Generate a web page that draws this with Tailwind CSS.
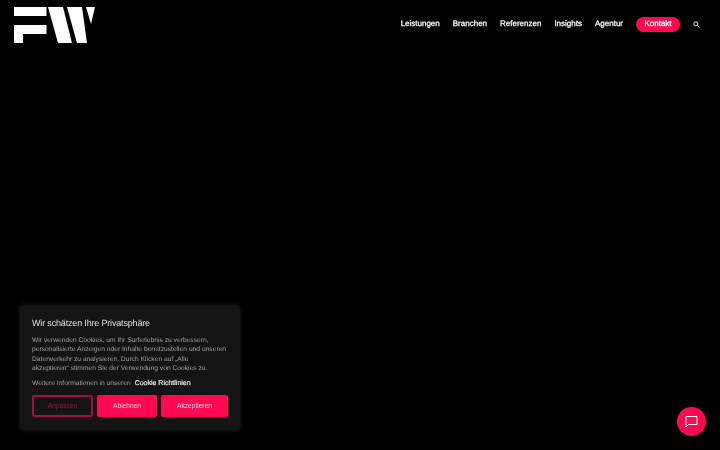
<!DOCTYPE html>
<html lang="de">
<head>
    <meta charset="UTF-8">
    <meta name="viewport" content="width=device-width, initial-scale=1.0">
    <title>FW</title>
    <script src="https://cdn.jsdelivr.net/npm/@tailwindcss/browser@4"></script>
</head>
<body class="bg-black h-[450px] overflow-hidden relative font-['Liberation_Sans',sans-serif] [text-rendering:geometricPrecision]">

    <!-- Header -->
    <header class="flex items-start justify-between pl-[14px] pr-[20px] pt-[7px]">
        <svg class="w-[82px] h-[37px]" viewBox="0 0 82 37" fill="#fff">
            <path d="M0 0H32.500V9H0Z"/>
            <path d="M0 18H32.500V27H9V36H0Z"/>
            <path d="M34 0H49L58 36H44Z"/>
            <path d="M53 0H68L73 36H63Z"/>
            <path d="M72 0H81L77 17Z"/>
        </svg>
        <nav class="flex items-center gap-[13px] text-white text-[8px] h-[14px] mt-[10px] [-webkit-text-stroke:0.25px_white] blur-[0.25px]">
            <a>Leistungen</a>
            <a>Branchen</a>
            <a>Referenzen</a>
            <a>Insights</a>
            <a>Agentur</a>
            <a class="bg-[#ff0a50] rounded-full w-[44px] h-[15px] flex items-center justify-center">Kontakt</a>
            <svg class="w-[7px] h-[7px]" viewBox="0 0 8 8" fill="none" stroke="#fff" stroke-width="1">
                <circle cx="3.2" cy="3.2" r="2.4"/>
                <path d="M5 5L7.5 7.5"/>
            </svg>
        </nav>
    </header>

    <!-- Cookie Banner -->
    <div class="absolute left-[20px] top-[305px] w-[220px] h-[125px] bg-[#141414] rounded-[4px] shadow-[0_0_4px_rgba(255,255,255,0.12)] px-[12px] pt-[12px] text-[#a0a0a0] blur-[0.25px]">
        <h2 class="text-[9px] leading-[13px] text-[#e0e0e0] tracking-[-0.17px]">Wir schätzen Ihre Privatsphäre</h2>
        <p class="text-[6.7px] leading-[9.4px] mt-[6px] whitespace-nowrap">Wir verwenden Cookies, um Ihr Surferlebnis zu verbessern,<br>personalisierte Anzeigen oder Inhalte bereitzustellen und unseren<br>Datenverkehr zu analysieren. Durch Klicken auf „Alle<br>akzeptieren“ stimmen Sie der Verwendung von Cookies zu.</p>
        <p class="text-[6.7px] leading-[10px] mt-[5px]">Weitere Informationen in unseren <span class="text-[7px] text-[#e8e8e8] ml-[2px] [-webkit-text-stroke:0.2px_#e8e8e8]">Cookie Richtlinien</span></p>
        <div class="flex gap-[4px] mt-[6px] text-[6.6px]">
            <button class="w-[61px] h-[22px] border-2 border-[#a0103c] text-[#a0103c] rounded-[2px]">Anpassen</button>
            <button class="w-[60px] h-[22px] bg-[#ff0a50] text-[#f5d0da] rounded-[2px]">Ablehnen</button>
            <button class="w-[67px] h-[22px] bg-[#ff0a50] text-[#f5d0da] rounded-[2px]">Akzeptieren</button>
        </div>
    </div>

    <!-- Chat Button -->
    <div class="absolute left-[677px] top-[407px] w-[29px] h-[29px] rounded-full bg-[#ff0a50] flex items-center justify-center">
        <svg class="w-[13px] h-[13px]" viewBox="0 0 13 13" fill="none" stroke="#fff" stroke-width="1" stroke-linejoin="round">
            <path d="M1 1.5H12V9.5H3.5L1 12Z"/>
        </svg>
    </div>

</body>
</html>
